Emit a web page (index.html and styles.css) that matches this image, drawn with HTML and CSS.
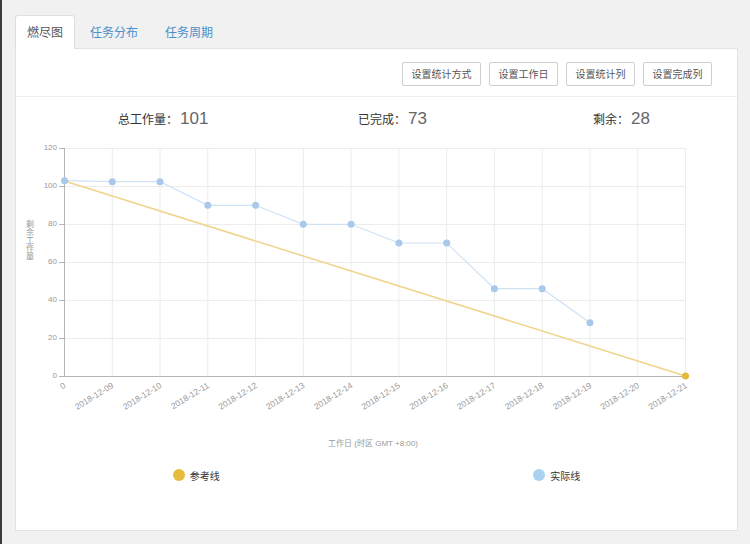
FILE: index.html
```html
<!DOCTYPE html>
<html>
<head>
<meta charset="utf-8">
<title>燃尽图</title>
<link rel="stylesheet" href="styles.css">
</head>
<body>
<div class="page">
  <ul class="tabs">
    <li class="tab active">燃尽图</li>
    <li class="tab">任务分布</li>
    <li class="tab">任务周期</li>
  </ul>
  <div class="panel">
    <div class="toolbar">
      <button class="btn">设置统计方式</button>
      <button class="btn">设置工作日</button>
      <button class="btn">设置统计列</button>
      <button class="btn">设置完成列</button>
    </div>
    <div class="stats">
      <div class="stat"><span class="stat-label">总工作量：</span><span class="stat-num">101</span></div>
      <div class="stat"><span class="stat-label">已完成：</span><span class="stat-num">73</span></div>
      <div class="stat"><span class="stat-label">剩余：</span><span class="stat-num">28</span></div>
    </div>
    <svg class="chart" width="721" height="320" viewBox="16 140 721 320" xmlns="http://www.w3.org/2000/svg">
      <g class="grid" stroke="#ececec" stroke-width="1">
        <line x1="64" y1="148.5" x2="685" y2="148.5"/>
        <line x1="64" y1="186.5" x2="685" y2="186.5"/>
        <line x1="64" y1="224.5" x2="685" y2="224.5"/>
        <line x1="64" y1="262.5" x2="685" y2="262.5"/>
        <line x1="64" y1="300.5" x2="685" y2="300.5"/>
        <line x1="64" y1="338.5" x2="685" y2="338.5"/>
        <line x1="112.3" y1="148" x2="112.3" y2="376"/>
        <line x1="160.0" y1="148" x2="160.0" y2="376"/>
        <line x1="207.8" y1="148" x2="207.8" y2="376"/>
        <line x1="255.6" y1="148" x2="255.6" y2="376"/>
        <line x1="303.3" y1="148" x2="303.3" y2="376"/>
        <line x1="351.1" y1="148" x2="351.1" y2="376"/>
        <line x1="398.9" y1="148" x2="398.9" y2="376"/>
        <line x1="446.7" y1="148" x2="446.7" y2="376"/>
        <line x1="494.4" y1="148" x2="494.4" y2="376"/>
        <line x1="542.2" y1="148" x2="542.2" y2="376"/>
        <line x1="590.0" y1="148" x2="590.0" y2="376"/>
        <line x1="637.7" y1="148" x2="637.7" y2="376"/>
        <line x1="685.5" y1="148" x2="685.5" y2="376"/>
      </g>
      <g stroke="#b5b5b5" stroke-width="1">
        <line x1="64.5" y1="148" x2="64.5" y2="376.5"/>
        <line x1="64" y1="376.5" x2="686" y2="376.5"/>
        <line x1="59" y1="148.5" x2="64" y2="148.5"/>
        <line x1="59" y1="186.5" x2="64" y2="186.5"/>
        <line x1="59" y1="224.5" x2="64" y2="224.5"/>
        <line x1="59" y1="262.5" x2="64" y2="262.5"/>
        <line x1="59" y1="300.5" x2="64" y2="300.5"/>
        <line x1="59" y1="338.5" x2="64" y2="338.5"/>
        <line x1="59" y1="376.5" x2="64" y2="376.5"/>
      </g>
      <g class="ylabels" fill="#999" font-size="8" text-anchor="end" dominant-baseline="middle">
        <text x="57" y="148">120</text>
        <text x="57" y="186">100</text>
        <text x="57" y="224">80</text>
        <text x="57" y="262">60</text>
        <text x="57" y="300">40</text>
        <text x="57" y="338">20</text>
        <text x="57" y="376">0</text>
      </g>
      <text class="yname" x="29" y="220" fill="#999" font-size="8" writing-mode="tb">剩余工作量</text>
      <g class="xlabels" fill="#999" font-size="8.5" text-anchor="end" dominant-baseline="middle">
        <text x="65" y="385" transform="rotate(-32 65 385)">0</text>
        <text x="113" y="385" transform="rotate(-32 113 385)">2018-12-09</text>
        <text x="161" y="385" transform="rotate(-32 161 385)">2018-12-10</text>
        <text x="208.5" y="385" transform="rotate(-32 208.5 385)">2018-12-11</text>
        <text x="256.5" y="385" transform="rotate(-32 256.5 385)">2018-12-12</text>
        <text x="304" y="385" transform="rotate(-32 304 385)">2018-12-13</text>
        <text x="352" y="385" transform="rotate(-32 352 385)">2018-12-14</text>
        <text x="399.5" y="385" transform="rotate(-32 399.5 385)">2018-12-15</text>
        <text x="447.5" y="385" transform="rotate(-32 447.5 385)">2018-12-16</text>
        <text x="495" y="385" transform="rotate(-32 495 385)">2018-12-17</text>
        <text x="543" y="385" transform="rotate(-32 543 385)">2018-12-18</text>
        <text x="591" y="385" transform="rotate(-32 591 385)">2018-12-19</text>
        <text x="638.5" y="385" transform="rotate(-32 638.5 385)">2018-12-20</text>
        <text x="686.5" y="385" transform="rotate(-32 686.5 385)">2018-12-21</text>
      </g>
      <text class="xname" x="373" y="444" fill="#999" font-size="8" text-anchor="middle" dominant-baseline="middle">工作日 (时区 GMT +8:00)</text>
      <polyline fill="none" stroke="#cfe2f5" stroke-width="1.2"
        points="64.5,180.7 112.3,181.7 160,181.7 207.8,205.3 255.6,205.3 303.3,224.3 351.1,224.3 398.9,243 446.7,243 494.4,288.7 542.2,288.7 590,322.7"/>
      <line x1="64.5" y1="181" x2="685.5" y2="376" stroke="#efd48a" stroke-width="1.5"/>
      <g fill="#a8c9ea">
        <circle cx="64.5" cy="180.7" r="3.5"/>
        <circle cx="112.3" cy="181.7" r="3.5"/>
        <circle cx="160" cy="181.7" r="3.5"/>
        <circle cx="207.8" cy="205.3" r="3.5"/>
        <circle cx="255.6" cy="205.3" r="3.5"/>
        <circle cx="303.3" cy="224.3" r="3.5"/>
        <circle cx="351.1" cy="224.3" r="3.5"/>
        <circle cx="398.9" cy="243" r="3.5"/>
        <circle cx="446.7" cy="243" r="3.5"/>
        <circle cx="494.4" cy="288.7" r="3.5"/>
        <circle cx="542.2" cy="288.7" r="3.5"/>
        <circle cx="590" cy="322.7" r="3.5"/>
      </g>
      <circle cx="685.5" cy="376" r="3.5" fill="#e2b93a"/>
    </svg>
    <div class="legend">
      <div class="legend-item"><span class="dot dot-ref"></span><span class="legend-text">参考线</span></div>
      <div class="legend-item"><span class="dot dot-act"></span><span class="legend-text">实际线</span></div>
    </div>
  </div>
</div>
</body>
</html>
```

FILE: styles.css
```css
html, body {
  margin: 0;
  padding: 0;
}
body {
  background: #f1f1f1;
  border-left: 2px solid #3c3c3c;
  height: 544px;
  box-sizing: border-box;
  overflow: hidden;
  font-family: "Noto Sans CJK SC", "Liberation Sans", sans-serif;
}
.page {
  padding: 15px 0 0 13px;
}
.tabs {
  display: flex;
  list-style: none;
  margin: 0 0 -1px 0;
  padding: 0;
  height: 34px;
  position: relative;
  z-index: 1;
}
.tab {
  height: 34px;
  box-sizing: border-box;
  padding: 0 11px;
  margin-right: 3px;
  border: 1px solid transparent;
  border-bottom: none;
  border-radius: 3px 3px 0 0;
  font-size: 12px;
  line-height: 32px;
  color: #4a90cc;
}
.tab.active {
  background: #fff;
  border-color: #dedede;
  color: #555;
}
.panel {
  width: 723px;
  height: 483px;
  box-sizing: border-box;
  background: #fff;
  border: 1px solid #e2e2e2;
}
.toolbar {
  display: flex;
  justify-content: flex-end;
  gap: 8px;
  padding: 13px 25px 10px 0;
  border-bottom: 1px solid #ececec;
}
.btn {
  height: 24px;
  padding: 0 8.5px;
  border: 1px solid #cfcfcf;
  border-radius: 2px;
  background: #fff;
  color: #555;
  font-family: "Noto Sans CJK SC", sans-serif;
  font-size: 10px;
  line-height: 22px;
}
.stats {
  display: grid;
  grid-template-columns: 240px 235px auto;
  align-items: baseline;
  padding: 12px 0 0 102px;
  height: 43px;
  box-sizing: border-box;
}
.stat {
  display: flex;
  align-items: baseline;
  white-space: nowrap;
}
.stat-label {
  font-size: 12px;
  color: #333;
}
.stat-num {
  font-family: "Liberation Sans", sans-serif;
  font-size: 17px;
  color: #666;
  margin-left: 2px;
}
.chart {
  display: block;
  font-family: "Liberation Sans", "Noto Sans CJK SC", sans-serif;
}
.legend {
  display: flex;
  justify-content: space-around;
  align-items: center;
  height: 30px;
}
.legend-item {
  display: flex;
  align-items: center;
  gap: 5px;
}
.dot {
  width: 12px;
  height: 12px;
  border-radius: 50%;
}
.dot-ref {
  background: #e7bc3c;
}
.dot-act {
  background: #a9d2f0;
}
.legend-text {
  font-size: 10px;
  color: #333;
}
```
